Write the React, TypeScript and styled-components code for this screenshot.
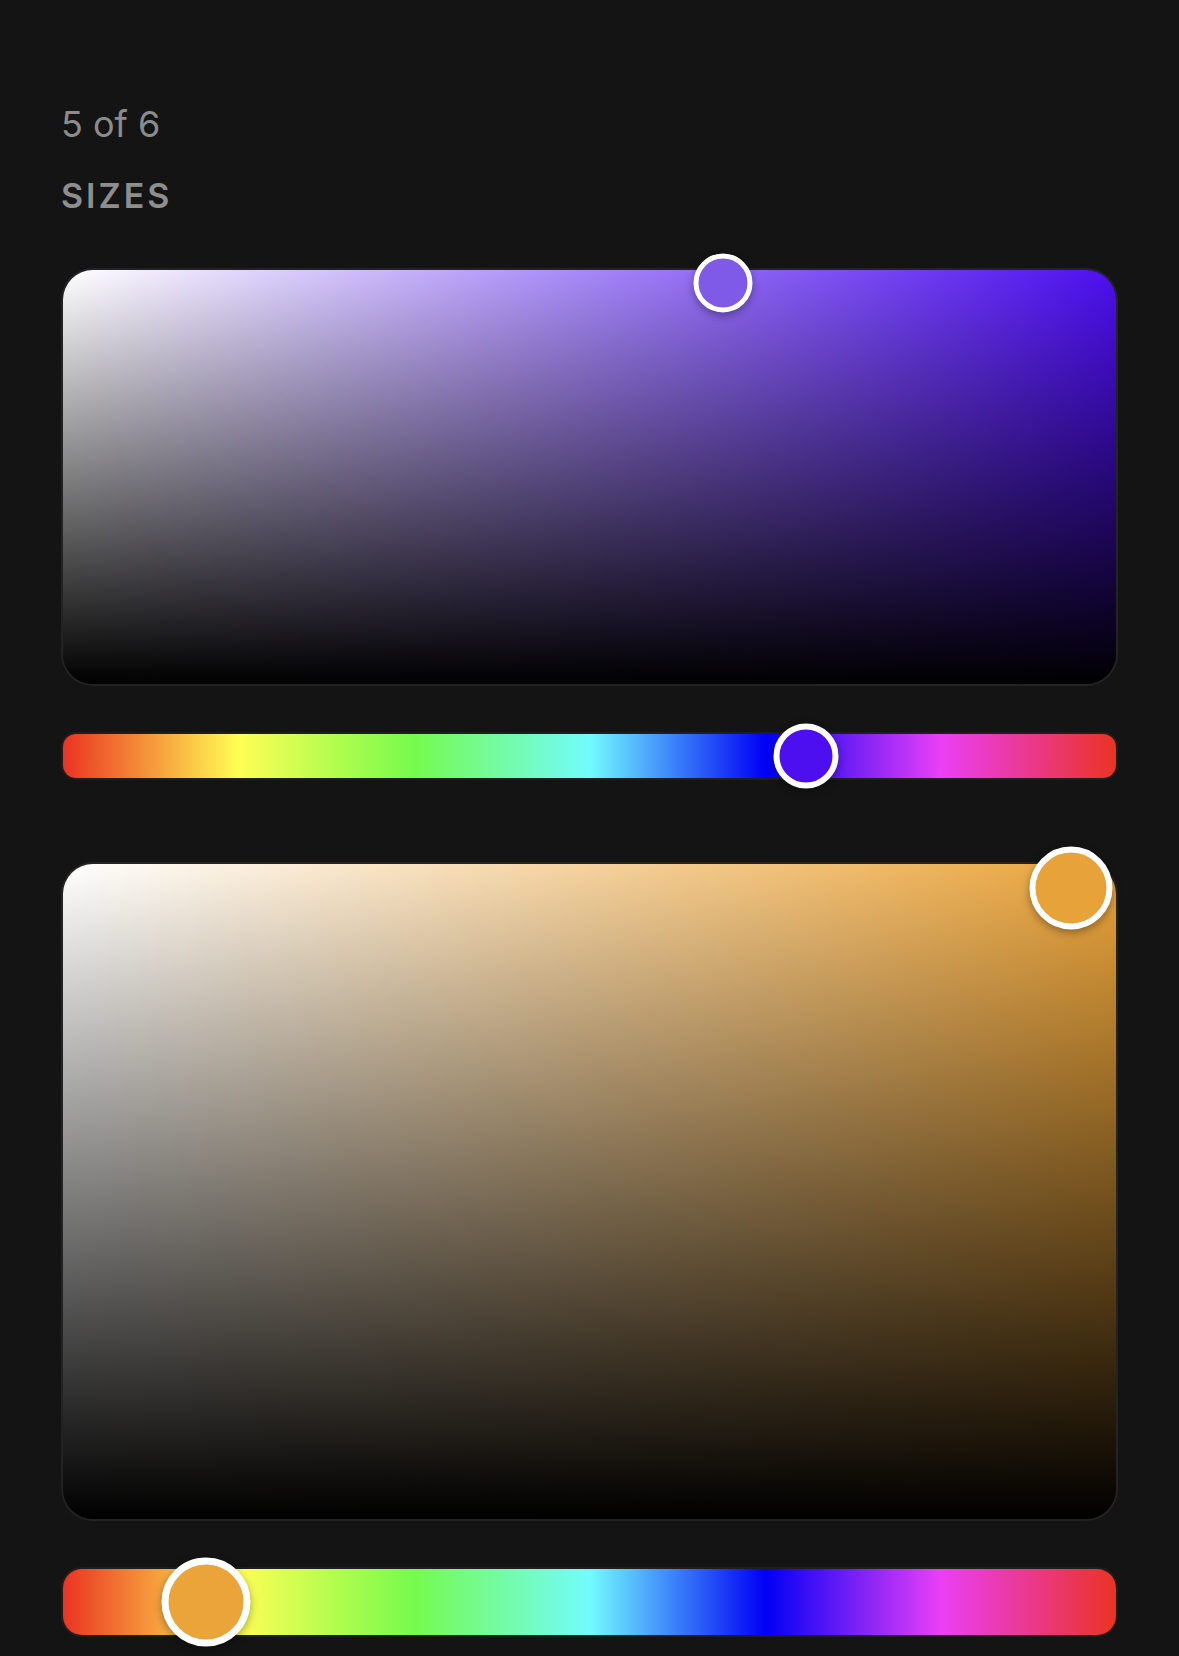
import React from 'react';
import styled, { createGlobalStyle } from 'styled-components';

const GlobalStyle = createGlobalStyle`
  html, body {
    margin: 0;
    padding: 0;
    background: #141414;
  }
  body {
    font-family: Inter, "Noto Sans", "Liberation Sans", sans-serif;
    -webkit-font-smoothing: antialiased;
  }
`;

const HUE_STOPS =
  '#ea3323 0%, #fffe54 16.7%, #75fb4c 33.3%, #73fbfd 50%, #0000f5 66.7%, #ea3ff7 83.3%, #ea3323 100%';

const Page = styled.div`
  box-sizing: border-box;
  width: 1179px;
  min-height: 1656px;
  padding: 102px 63px 0 63px;
  display: flex;
  flex-direction: column;
`;

const Counter = styled.div`
  margin-left: -2px;
  font-size: 36px;
  font-weight: 400;
  line-height: 44px;
  color: #8c8c8c;
`;

const SectionLabel = styled.div`
  margin: 30px 0 0 -2px;
  font-size: 34px;
  font-weight: 600;
  line-height: 40px;
  letter-spacing: 3px;
  color: #8e8e8e;
`;

const SatPanel = styled.div<{ $hue: string; $height: number; $top: number }>`
  position: relative;
  margin-top: ${(p) => p.$top}px;
  height: ${(p) => p.$height}px;
  border-radius: 30px;
  background:
    linear-gradient(to bottom, rgba(0, 0, 0, 0), #000),
    linear-gradient(to right, #fff, ${(p) => p.$hue});
  box-shadow: 0 0 0 2px #232323;
`;

const HueBar = styled.div<{ $height: number; $top: number }>`
  position: relative;
  margin-top: ${(p) => p.$top}px;
  height: ${(p) => p.$height}px;
  border-radius: ${(p) => Math.round(p.$height * 0.29)}px;
  background: linear-gradient(to right, ${HUE_STOPS});
  box-shadow: 0 0 0 2px #1e1e1e;
`;

const Thumb = styled.div<{ $size: number; $ring: number; $color: string }>`
  position: absolute;
  box-sizing: border-box;
  width: ${(p) => p.$size}px;
  height: ${(p) => p.$size}px;
  border-radius: 50%;
  border: ${(p) => p.$ring}px solid #fff;
  background: ${(p) => p.$color};
  transform: translate(-50%, -50%);
  box-shadow: 0 3px 8px rgba(0, 0, 0, 0.35);
`;

interface PickerProps {
  hue: string;
  thumbColor: string;
  panelHeight: number;
  panelTop: number;
  sat: { x: number; y: number; size: number; ring: number };
  bar: { x: number; height: number; size: number; ring: number };
}

const ColorPicker: React.FC<PickerProps> = ({ hue, thumbColor, panelHeight, panelTop, sat, bar }) => (
  <>
    <SatPanel $hue={hue} $height={panelHeight} $top={panelTop}>
      <Thumb
        $size={sat.size}
        $ring={sat.ring}
        $color={thumbColor}
        style={{ left: `${sat.x}%`, top: `${sat.y}%` }}
      />
    </SatPanel>
    <HueBar $height={bar.height} $top={50}>
      <Thumb
        $size={bar.size}
        $ring={bar.ring}
        $color={hue}
        style={{ left: `${bar.x}%`, top: '50%' }}
      />
    </HueBar>
  </>
);

export default function App() {
  return (
    <>
      <GlobalStyle />
      <Page>
        <Counter>5 of 6</Counter>
        <SectionLabel>SIZES</SectionLabel>
        <ColorPicker
          hue="#4d0ff0"
          thumbColor="#7f5ae8"
          panelHeight={414}
          panelTop={54}
          sat={{ x: 62.7, y: 3.1, size: 59, ring: 5 }}
          bar={{ x: 70.6, height: 44, size: 65, ring: 6 }}
        />
        <ColorPicker
          hue="#eba43a"
          thumbColor="#e8a23a"
          panelHeight={655}
          panelTop={86}
          sat={{ x: 95.7, y: 3.7, size: 83, ring: 6 }}
          bar={{ x: 13.6, height: 66, size: 89, ring: 7 }}
        />
      </Page>
    </>
  );
}
